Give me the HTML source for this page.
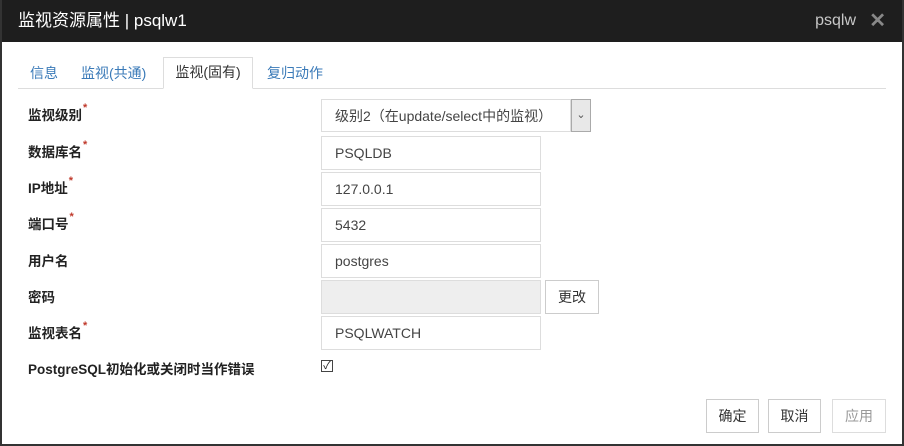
<!DOCTYPE html>
<html><head><meta charset="utf-8"><style>
*{box-sizing:border-box;margin:0;padding:0}
body{width:904px;height:446px;background:#fff;font-family:"Liberation Sans","Noto Sans CJK SC",sans-serif;position:relative;overflow:hidden}
.frame{position:absolute;left:0;top:0;width:904px;height:446px;border:2px solid #333;border-top:0}
.hdr{position:absolute;left:0;top:0;width:904px;height:42px;background:#1e1e1e;color:#fff;font-size:17px;line-height:42px;padding-left:18px}
.hdr .r{position:absolute;right:48px;top:0;color:#c8c8c8;font-size:16px}
.hdr .x{position:absolute;right:18px;top:0;color:#888;font-size:20px;font-weight:bold}
.tabline{position:absolute;left:18px;top:88px;width:868px;height:1px;background:#ddd}
.tab{position:absolute;top:63px;font-size:14px;color:#3a7ab8}
.tab.act{top:57px;left:163px;width:90px;height:32px;border:1px solid #ddd;border-bottom:1px solid #fff;background:#fff;color:#333;text-align:center;line-height:29px}
.lbl{position:absolute;left:28px;font-size:13.5px;font-weight:bold;color:#222}
.lbl i{color:#c0392b;font-style:normal;font-size:11px;vertical-align:top;position:relative;top:-2px;margin-left:1px}
.inp{position:absolute;left:321px;width:220px;height:34px;border:1px solid #ddd;font-size:14px;color:#444;padding-left:13px;line-height:32px}
.btn{position:absolute;height:34px;border:1px solid #ccc;font-size:14px;color:#333;text-align:center;line-height:32px;background:#fff}
</style></head><body>
<div class="hdr">监视资源属性 | psqlw1<span class="r">psqlw</span><span class="x">✕</span></div>
<div class="frame"></div>
<div class="tabline"></div>
<div class="tab" style="left:30px">信息</div>
<div class="tab" style="left:81px">监视(共通)</div>
<div class="tab act">监视(固有)</div>
<div class="tab" style="left:267px">复归动作</div>

<div class="lbl" style="top:104px">监视级别<i>*</i></div>
<div class="inp" style="top:99px;width:250px;height:33px">级别2（在update/select中的监视）</div>
<div style="position:absolute;left:571px;top:99px;width:20px;height:33px;border:1px solid #aaa;background:#e8e8e8;text-align:center;line-height:30px;font-size:11px;color:#555">⌄</div>

<div class="lbl" style="top:141px">数据库名<i>*</i></div>
<div class="inp" style="top:136px">PSQLDB</div>
<div class="lbl" style="top:177px">IP地址<i>*</i></div>
<div class="inp" style="top:172px">127.0.0.1</div>
<div class="lbl" style="top:213px">端口号<i>*</i></div>
<div class="inp" style="top:208px">5432</div>
<div class="lbl" style="top:250px">用户名</div>
<div class="inp" style="top:244px">postgres</div>
<div class="lbl" style="top:286px">密码</div>
<div class="inp" style="top:280px;background:#eee"></div>
<div class="btn" style="left:545px;top:280px;width:54px">更改</div>
<div class="lbl" style="top:322px">监视表名<i>*</i></div>
<div class="inp" style="top:316px">PSQLWATCH</div>
<div class="lbl" style="top:358px">PostgreSQL初始化或关闭时当作错误</div>
<div style="position:absolute;left:321px;top:360px;width:12px;height:12px;border:1px solid #444;font-size:11px;line-height:10px;text-align:center;color:#222">✓</div>

<div class="btn" style="left:706px;top:399px;width:53px">确定</div>
<div class="btn" style="left:768px;top:399px;width:53px">取消</div>
<div class="btn" style="left:832px;top:399px;width:54px;color:#999;border-color:#ddd">应用</div>
</body></html>
